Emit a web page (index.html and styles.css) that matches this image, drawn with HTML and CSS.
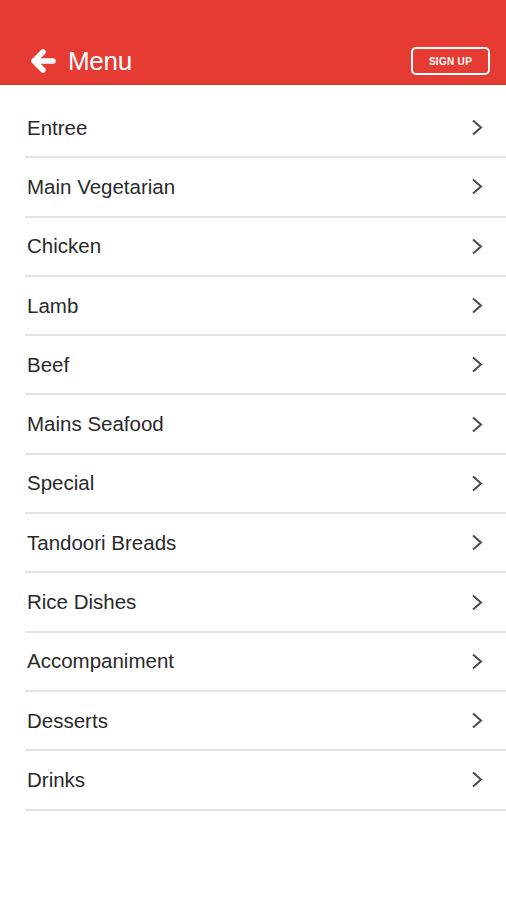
FILE: index.html
```html
<!DOCTYPE html>
<html lang="en">

<head>
    <meta charset="UTF-8">
    <meta name="viewport" content="width=device-width, initial-scale=1.0">
    <title>Menu</title>

    <link rel="stylesheet" href="styles.css">
</head>

<body>

    <div class="top_bar">
        <div class="title_box">
            <svg class="back_arrow" width="26" height="24" viewBox="0 0 26 24">
                <path d="M13 3 L4 12 L13 21 M4 12 L23 12" fill="none" stroke="#fff" stroke-width="5.5" stroke-linecap="round" stroke-linejoin="round" />
            </svg>
            <span class="title">Menu</span>
        </div>
        <button class="sign_up">SIGN UP</button>
    </div>

    <div class="menu_list">
        <div class="menu_item"><span>Entree</span><svg class="chevron" width="12" height="17" viewBox="0 0 12 17"><path d="M2 1.5 L10 8.5 L2 15.5" fill="none" stroke="#4a4a4a" stroke-width="2" /></svg></div>
        <div class="menu_item"><span>Main Vegetarian</span><svg class="chevron" width="12" height="17" viewBox="0 0 12 17"><path d="M2 1.5 L10 8.5 L2 15.5" fill="none" stroke="#4a4a4a" stroke-width="2" /></svg></div>
        <div class="menu_item"><span>Chicken</span><svg class="chevron" width="12" height="17" viewBox="0 0 12 17"><path d="M2 1.5 L10 8.5 L2 15.5" fill="none" stroke="#4a4a4a" stroke-width="2" /></svg></div>
        <div class="menu_item"><span>Lamb</span><svg class="chevron" width="12" height="17" viewBox="0 0 12 17"><path d="M2 1.5 L10 8.5 L2 15.5" fill="none" stroke="#4a4a4a" stroke-width="2" /></svg></div>
        <div class="menu_item"><span>Beef</span><svg class="chevron" width="12" height="17" viewBox="0 0 12 17"><path d="M2 1.5 L10 8.5 L2 15.5" fill="none" stroke="#4a4a4a" stroke-width="2" /></svg></div>
        <div class="menu_item"><span>Mains Seafood</span><svg class="chevron" width="12" height="17" viewBox="0 0 12 17"><path d="M2 1.5 L10 8.5 L2 15.5" fill="none" stroke="#4a4a4a" stroke-width="2" /></svg></div>
        <div class="menu_item"><span>Special</span><svg class="chevron" width="12" height="17" viewBox="0 0 12 17"><path d="M2 1.5 L10 8.5 L2 15.5" fill="none" stroke="#4a4a4a" stroke-width="2" /></svg></div>
        <div class="menu_item"><span>Tandoori Breads</span><svg class="chevron" width="12" height="17" viewBox="0 0 12 17"><path d="M2 1.5 L10 8.5 L2 15.5" fill="none" stroke="#4a4a4a" stroke-width="2" /></svg></div>
        <div class="menu_item"><span>Rice Dishes</span><svg class="chevron" width="12" height="17" viewBox="0 0 12 17"><path d="M2 1.5 L10 8.5 L2 15.5" fill="none" stroke="#4a4a4a" stroke-width="2" /></svg></div>
        <div class="menu_item"><span>Accompaniment</span><svg class="chevron" width="12" height="17" viewBox="0 0 12 17"><path d="M2 1.5 L10 8.5 L2 15.5" fill="none" stroke="#4a4a4a" stroke-width="2" /></svg></div>
        <div class="menu_item"><span>Desserts</span><svg class="chevron" width="12" height="17" viewBox="0 0 12 17"><path d="M2 1.5 L10 8.5 L2 15.5" fill="none" stroke="#4a4a4a" stroke-width="2" /></svg></div>
        <div class="menu_item"><span>Drinks</span><svg class="chevron" width="12" height="17" viewBox="0 0 12 17"><path d="M2 1.5 L10 8.5 L2 15.5" fill="none" stroke="#4a4a4a" stroke-width="2" /></svg></div>
    </div>

</body>

</html>
```

FILE: styles.css
```css
* {
    margin: 0;
    padding: 0;
    box-sizing: border-box;
}

body {
    background-color: #ffffff;
    font-family: 'Liberation Sans', Arial, sans-serif;
}

.top_bar {
    height: 85px;
    background-color: #e53b33;
    border-bottom: 2px solid #d8332c;
    display: flex;
    justify-content: space-between;
    align-items: flex-end;
    padding: 0 16px 8px 30px;
}

.title_box {
    display: flex;
    align-items: center;
    height: 28px;
}

.back_arrow {
    margin-right: 12px;
}

.title {
    color: #ffffff;
    font-size: 26px;
    letter-spacing: -0.3px;
}

.sign_up {
    width: 79px;
    height: 28px;
    border: 2px solid #ffffff;
    border-radius: 5px;
    background-color: transparent;
    color: #ffffff;
    font-family: 'Liberation Sans', Arial, sans-serif;
    font-weight: bold;
    font-size: 10px;
    letter-spacing: 0.3px;
}

.menu_list {
    margin-top: 14px;
    padding-left: 25px;
}

.menu_item {
    height: 59.3px;
    border-bottom: 2px solid #e4e4e4;
    display: flex;
    justify-content: space-between;
    align-items: center;
    padding: 0 23px 0 2px;
    color: #2a2a2a;
    font-size: 20.5px;
}
```
